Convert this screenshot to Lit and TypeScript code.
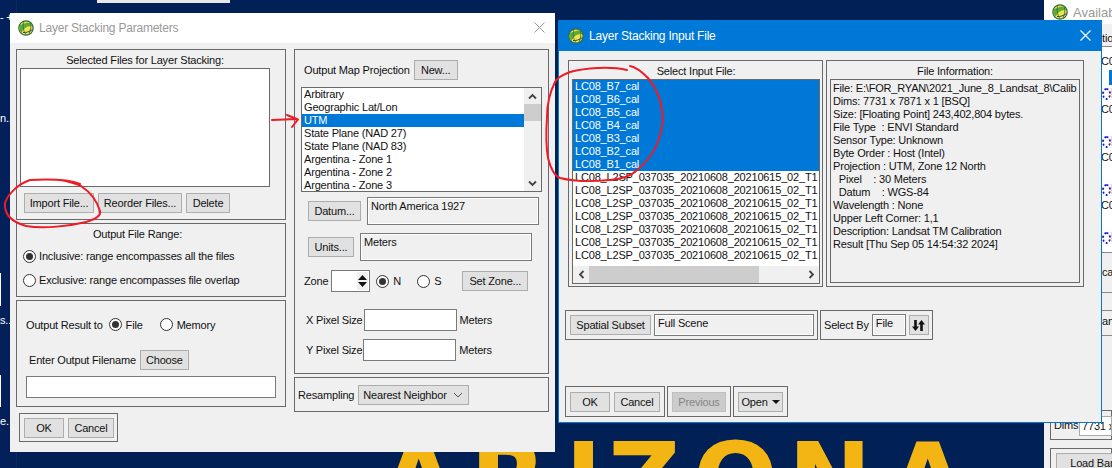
import { LitElement, html, css, svg } from 'lit';
import { customElement } from 'lit/decorators.js';

const globe = svg`<svg class="globe" width="16" height="16" viewBox="0 0 16 16">
  <circle cx="8" cy="8" r="7.2" fill="#f3e24a" stroke="#2e6b3a" stroke-width="1.2"/>
  <path d="M2 5.5C5 3.5 9 2 12.5 2.6L14.4 6C11 5.4 6 7 3.6 13L1.4 9.5Z" fill="#5cab3a"/>
  <path d="M6 1.2C4.5 5 5 10.5 8 14.8M12.5 2.6C13 6.5 13 10 11 14" fill="none" stroke="#2e6b3a" stroke-width=".8"/>
  <path d="M5 12.5C8 12.8 11 12 14.5 9.5" fill="none" stroke="#1d4f7a" stroke-width="1"/>
</svg>`;

const projections = ['Arbitrary', 'Geographic Lat/Lon', 'UTM', 'State Plane (NAD 27)', 'State Plane (NAD 83)',
  'Argentina - Zone 1', 'Argentina - Zone 2', 'Argentina - Zone 3'];
const selectedBands = ['B7', 'B6', 'B5', 'B4', 'B3', 'B2', 'B1'];
const info = ['File: E:\\FOR_RYAN\\2021_June_8_Landsat_8\\Calib', 'Dims: 7731 x 7871 x 1 [BSQ]',
  'Size: [Floating Point] 243,402,804 bytes.', 'File Type  : ENVI Standard', 'Sensor Type: Unknown',
  'Byte Order : Host (Intel)', 'Projection : UTM, Zone 12 North', '  Pixel    : 30 Meters', '  Datum    : WGS-84',
  'Wavelength : None', 'Upper Left Corner: 1,1', 'Description: Landsat TM Calibration',
  'Result [Thu Sep 05 14:54:32 2024]'];
// the wallpaper lettering is wider set than the font, so each letter gets its own cell
const brand: [string, number][] = [['A', 90], ['R', 95], ['I', 43], ['Z', 85], ['O', 95], ['N', 101], ['A', 90]];

const chevron = (d: string) => svg`<svg width="9" height="7" viewBox="0 0 9 7"><path d="${d}" fill="none" stroke="#444" stroke-width="1.8"/></svg>`;

@customElement('app-root')
export class AppRoot extends LitElement {
  static styles = css`
    :host {
      display: block;
      width: 1112px;
      height: 468px;
      overflow: hidden;
      position: relative;
      background: #012055;
      font-family: "Liberation Sans", Arial, sans-serif;
      font-size: 11px;
      letter-spacing: -0.18px;
      color: #111;
    }
    * { box-sizing: border-box; }
    .globe { flex: none; }

    /* desktop behind the dialogs */
    .brand {
      position: absolute; left: 380px; top: 430px; display: flex;
      font: bold 100px/100px "DejaVu Sans", sans-serif;
      letter-spacing: 0; color: #f2b514; white-space: nowrap;
    }
    .topbox { position: absolute; left: 97px; top: 0; width: 133px; height: 3px; background: #e8e8e8; }
    .topline { position: absolute; left: 0; top: 0; width: 17px; height: 468px; background: #03205a; border-right: 1px solid #0a2a66; }
    .deskbox { position: absolute; left: 0; width: 1px; background: #fff; }
    .box1 { top: 273px; height: 33px; }
    .box2 { top: 375px; height: 32px; }
    .desktxt { position: absolute; left: 0; color: #fff; font-size: 11px; line-height: 13px; white-space: nowrap; }
    .t0 { top: 11px; }
    .t1 { top: 112px; }
    .t2 { top: 314px; }
    .t3 { top: 415px; }

    .win { position: absolute; background: #f0f0f0; }
    .titlebar { display: flex; align-items: center; gap: 5px; font-size: 12px; letter-spacing: -0.22px; padding-left: 8px; white-space: nowrap; }

    /* third window, mostly hidden */
    .back { left: 1044px; top: 0; width: 68px; height: 468px; overflow: hidden; }
    .back .titlebar { height: 24px; background: #fff; color: #999; font-size: 13px; letter-spacing: 0; }
    .back .tab { height: 22px; padding-left: 58px; line-height: 28px; white-space: nowrap; }
    .back .list { height: 206px; background: #fff; padding-left: 57px; overflow: hidden; border-top: 1px solid #888; }
    .back .item { height: 48px; position: relative; line-height: 13px; padding-top: 8px; white-space: nowrap; }
    .back .dot { position: absolute; left: 1px; top: 41px; width: 9px; height: 12px; border: 2px dotted #1c1cd8; border-radius: 50%; }
    .back .mark { position: absolute; left: 10px; top: 41px; width: 4px; height: 10px; background: #f6dca0; }
    .back .sel { position: absolute; left: 8px; top: 23px; width: 8px; height: 15px; background: #0078d7; }
    .back .strip { border-top: 1px solid #888; border-bottom: 1px solid #888; padding-left: 58px; white-space: nowrap; overflow: hidden; }
    .back .s1 { height: 41px; line-height: 38px; }
    .back .s2 { height: 26px; line-height: 20px; margin-top: 17px; }
    .back .dims { position: absolute; left: 6px; top: 410px; width: 62px; height: 30px; border: 1px solid #696969; padding: 8px 0 0 3px; white-space: nowrap; }
    .back .dimval { position: absolute; left: 35px; top: 416px; width: 33px; height: 20px; background: #fff; border: 1px solid #aaa; padding-left: 2px; line-height: 18px; white-space: nowrap; overflow: hidden; }
    .back .loadgrp { position: absolute; left: 6px; top: 448px; width: 62px; height: 30px; border: 1px solid #696969; padding: 4px 0 0 5px; }

    /* shared controls */
    .group { border: 1px solid #696969; }
    .btn {
      display: flex; align-items: center; justify-content: center; height: 20px; flex: none;
      background: #e1e1e1; border: 1px solid #adadad; white-space: nowrap;
    }
    .btn.off { background: #cccccc; border-color: #bfbfbf; color: #858585; }
    .field { background: #fff; border: 1px solid #7a7a7a; flex: none; }
    .readout { border: 1px solid #7a7a7a; box-shadow: inset 0 0 0 1px #fff; padding: 2px 3px; flex: none; }
    .row { display: flex; align-items: center; }
    .radio {
      width: 13px; height: 13px; border-radius: 50%; background: #fff; border: 1px solid #333; flex: none;
      display: flex; align-items: center; justify-content: center;
    }
    .radio.on::after { content: ''; width: 7px; height: 7px; border-radius: 50%; background: #333; }
    .listbox { background: #fff; border: 1px solid #696969; overflow: hidden; flex: none; }
    .li { height: 13px; line-height: 13px; padding-left: 2px; white-space: nowrap; overflow: hidden; }
    .li.sel { background: #0078d7; color: #fff; }
    .sb-arrow { display: flex; align-items: center; justify-content: center; flex: none; }

    /* layer stacking parameters */
    .params { left: 10px; top: 13px; width: 545px; height: 439px; }
    .params .titlebar { height: 30px; background: #fff; color: #999; position: relative; }
    .close { position: absolute; display: flex; }
    .params .close { right: 9px; top: 8px; }
    .params-body { display: flex; gap: 8px; padding: 6px 0 0 6px; }
    .col { display: flex; flex-direction: column; gap: 3px; flex: none; }
    .g-sel { width: 270px; height: 171px; padding: 3px 3px 0 3px; }
    .g-title { line-height: 15px; height: 15px; text-align: center; white-space: nowrap; }
    .g-sel .g-title { width: 250px; }
    .g-sel .listbox { width: 250px; height: 119px; }
    .file-btns { gap: 4px; margin: 6px 0 0 4px; }
    .g-range { width: 270px; height: 74px; padding-top: 3px; }
    .g-range .g-title { width: 241px; }
    .radio-line { gap: 3px; padding-left: 6px; height: 24px; white-space: nowrap; }
    .g-range .g-title + .radio-line { margin-top: 2px; }
    .g-output { width: 270px; height: 107px; padding: 16px 0 0 9px; }
    .out-to { height: 15px; white-space: nowrap; }
    .g-output .radio { margin: 0 4px 0 6px; }
    .g-output .radio.memory { margin-left: 17px; }
    .out-name { gap: 4px; margin: 18px 0 0 3px; white-space: nowrap; }
    .g-output .field { width: 250px; height: 22px; margin-top: 6px; }
    .g-ok { margin: 3px 0 0 3px; width: 99px; height: 29px; gap: 4px; padding-left: 4px; }

    .g-proj { width: 255px; height: 325px; padding: 10px 0 0 6px; }
    .proj-head { gap: 4px; margin-left: 3px; white-space: nowrap; }
    .proj-list { display: flex; width: 241px; height: 105px; margin-top: 7px; }
    .proj-list .rows { flex: 1; min-width: 0; }
    .vbar { width: 17px; flex: none; background: #f0f0f0; display: flex; flex-direction: column; height: 103px; }
    .vbar .sb-arrow { height: 16px; }
    .vbar .thumb { height: 17px; background: #cdcdcd; flex: none; }
    .vbar .fill { flex: 1; }
    .datum { gap: 6px; margin: 5px 0 0 7px; }
    .datum .readout { width: 172px; height: 28px; }
    .units { gap: 6px; margin: 8px 0 0 7px; }
    .units .readout { width: 172px; height: 28px; }
    .zone { margin: 8px 0 0 3px; height: 24px; white-space: nowrap; }
    .spin { width: 39px; height: 22px; margin-left: 3px; display: flex; justify-content: flex-end; padding: 1px; }
    .spin svg { display: block; }
    .zone .radio-n { margin: 0 4px 0 6px; }
    .zone .radio-s { margin: 0 4px 0 16px; }
    .zone .btn { margin-left: 21px; width: 66px; }
    .px { margin: 16px 0 0 5px; height: 22px; gap: 1px; white-space: nowrap; }
    .px + .px { margin-top: 8px; }
    .px .field { width: 93px; height: 22px; margin-right: 2px; }
    .g-resample { width: 255px; height: 35px; padding-left: 3px; gap: 4px; white-space: nowrap; }
    .select { width: 111px; justify-content: space-between; padding: 0 5px 0 4px; }

    /* layer stacking input file */
    .input { left: 558px; top: 20px; width: 544px; height: 403px; border: 1px solid #0078d7; }
    .input .titlebar { height: 30px; background: #0078d7; color: #fff; padding-left: 9px; position: relative; }
    .input .close { right: 9px; top: 8px; }
    .panes { display: flex; gap: 3px; padding: 9px 0 0 9px; }
    .g-files { width: 255px; height: 227px; padding: 3px 0 0 3px; }
    .g-files .g-title { width: 248px; }
    .g-files .listbox { width: 248px; height: 205px; margin-top: 0; display: flex; flex-direction: column; }
    .g-files .rows { height: 186px; overflow: hidden; }
    .hbar { height: 17px; display: flex; background: #f0f0f0; flex: none; }
    .hbar .sb-arrow { width: 16px; }
    .hbar .thumb { width: 170px; background: #cdcdcd; flex: none; }
    .hbar .fill { flex: 1; }
    .g-info { width: 258px; height: 227px; padding: 3px 0 0 3px; }
    .g-info .g-title { width: 250px; }
    .info-box { width: 250px; height: 204px; border: 1px solid #696969; padding: 2px 2px; overflow: hidden; }
    .info-box div { height: 13px; line-height: 13px; white-space: pre; }
    .subset-row { display: flex; gap: 2px; margin: 23px 0 0 6px; }
    .g-subset { width: 253px; height: 30px; padding-left: 4px; gap: 3px; }
    .g-subset .readout { width: 160px; height: 22px; }
    .g-by { width: 113px; height: 30px; padding-left: 3px; white-space: nowrap; }
    .g-by .readout { width: 34px; height: 22px; margin: 0 3px 0 3px; }
    .g-by .btn { width: 20px; }
    .action-row { display: flex; gap: 2px; margin: 46px 0 0 6px; }
    .action { height: 31px; padding: 0 4px; gap: 4px; }
    .action.a1 { width: 100px; }
    .action.a2 { width: 64px; }
    .action.a3 { width: 55px; }
    .caret { width: 0; height: 0; border: 4px solid transparent; border-top-color: #111; border-bottom: 0; margin-left: 4px; }

    .ink { position: absolute; left: 0; top: 0; pointer-events: none; }
  `;

  private desktop() {
    return html`
      <div class="topline"></div>
      <div class="topbox"></div>
      <div class="deskbox box1"></div>
      <div class="deskbox box2"></div>
      <div class="desktxt t0">- +</div>
      <div class="desktxt t1">n..</div>
      <div class="desktxt t2">s..</div>
      <div class="desktxt t3">e.</div>
      <div class="brand">${brand.map(([c, w]) => html`<span style="width:${w}px">${c}</span>`)}</div>
    `;
  }

  private backWindow() {
    const items = ['sel', '', '', ''];
    return html`
      <div class="win back">
        <div class="titlebar">${globe}<span>Available Bands List</span></div>
        <div class="tab">tions</div>
        <div class="list">
          ${items.map((kind) => html`
            <div class="item">C08_B1
              <span class="dot"></span>
              <span class="mark"></span>
              ${kind === 'sel' ? html`<span class="sel"></span>` : ''}
            </div>`)}
        </div>
        <div class="strip s1">cal</div>
        <div class="strip s2">an</div>
        <div class="dims">Dims</div>
        <div class="dimval">7731 x</div>
        <div class="loadgrp"><div class="btn" style="width:80px">Load Band</div></div>
      </div>
    `;
  }

  private paramsWindow() {
    return html`
      <div class="win params">
        <div class="titlebar">
          ${globe}<span>Layer Stacking Parameters</span>
          <span class="close"><svg width="13" height="13" viewBox="0 0 13 13"><path d="M1.5 1.5l10 10M11.5 1.5l-10 10" stroke="#999" stroke-width="1"/></svg></span>
        </div>
        <div class="params-body">
          <div class="col">
            <div class="group g-sel">
              <div class="g-title">Selected Files for Layer Stacking:</div>
              <div class="listbox"></div>
              <div class="row file-btns">
                <div class="btn" style="width:70px">Import File...</div>
                <div class="btn" style="width:84px">Reorder Files...</div>
                <div class="btn" style="width:44px">Delete</div>
              </div>
            </div>
            <div class="group g-range">
              <div class="g-title">Output File Range:</div>
              <div class="row radio-line"><span class="radio on"></span>Inclusive: range encompasses all the files</div>
              <div class="row radio-line"><span class="radio"></span>Exclusive: range encompasses file overlap</div>
            </div>
            <div class="group g-output">
              <div class="row out-to">Output Result to<span class="radio on"></span>File<span class="radio memory"></span>Memory</div>
              <div class="row out-name">Enter Output Filename<div class="btn" style="width:49px">Choose</div></div>
              <div class="field"></div>
            </div>
            <div class="group row g-ok">
              <div class="btn" style="width:40px">OK</div>
              <div class="btn" style="width:46px">Cancel</div>
            </div>
          </div>
          <div class="col">
            <div class="group g-proj">
              <div class="row proj-head">Output Map Projection<div class="btn" style="width:44px">New...</div></div>
              <div class="listbox proj-list">
                <div class="rows">
                  ${projections.map((p) => html`<div class="li ${p === 'UTM' ? 'sel' : ''}">${p}</div>`)}
                </div>
                <div class="vbar">
                  <div class="sb-arrow">${chevron('M1 5.5L4.5 2L8 5.5')}</div>
                  <div class="thumb"></div>
                  <div class="fill"></div>
                  <div class="sb-arrow">${chevron('M1 1.5L4.5 5L8 1.5')}</div>
                </div>
              </div>
              <div class="row datum">
                <div class="btn" style="width:53px">Datum...</div>
                <div class="readout">North America 1927</div>
              </div>
              <div class="row units">
                <div class="btn" style="width:46px">Units...</div>
                <div class="readout">Meters</div>
              </div>
              <div class="row zone">
                Zone
                <div class="field spin">
                  <svg width="11" height="18" viewBox="0 0 11 18"><rect width="11" height="18" fill="#f0f0f0"/><path d="M1 8L5.5 3L10 8ZM1 10L5.5 15L10 10Z" fill="#111"/></svg>
                </div>
                <span class="radio on radio-n"></span>N
                <span class="radio radio-s"></span>S
                <div class="btn">Set Zone...</div>
              </div>
              <div class="row px">X Pixel Size<div class="field"></div>Meters</div>
              <div class="row px">Y Pixel Size<div class="field"></div>Meters</div>
            </div>
            <div class="group row g-resample">
              Resampling
              <div class="btn select">Nearest Neighbor
                <svg width="10" height="6" viewBox="0 0 10 6"><path d="M1 1L5 5L9 1" fill="none" stroke="#555" stroke-width="1"/></svg>
              </div>
            </div>
          </div>
        </div>
      </div>
    `;
  }

  private inputWindow() {
    const rest = Array.from({ length: 7 }, () => 'LC08_L2SP_037035_20210608_20210615_02_T1');
    return html`
      <div class="win input">
        <div class="titlebar">
          ${globe}<span>Layer Stacking Input File</span>
          <span class="close"><svg width="13" height="13" viewBox="0 0 13 13"><path d="M1.5 1.5l10 10M11.5 1.5l-10 10" stroke="#fff" stroke-width="1.2"/></svg></span>
        </div>
        <div class="panes">
          <div class="group g-files">
            <div class="g-title">Select Input File:</div>
            <div class="listbox">
              <div class="rows">
                ${selectedBands.map((b) => html`<div class="li sel">LC08_${b}_cal</div>`)}
                ${rest.map((r) => html`<div class="li">${r}</div>`)}
              </div>
              <div class="hbar">
                <div class="sb-arrow">
                  <svg width="7" height="9" viewBox="0 0 7 9"><path d="M5.5 1L2 4.5L5.5 8" fill="none" stroke="#444" stroke-width="1.8"/></svg>
                </div>
                <div class="thumb"></div>
                <div class="fill"></div>
                <div class="sb-arrow">
                  <svg width="7" height="9" viewBox="0 0 7 9"><path d="M1.5 1L5 4.5L1.5 8" fill="none" stroke="#444" stroke-width="1.8"/></svg>
                </div>
              </div>
            </div>
          </div>
          <div class="group g-info">
            <div class="g-title">File Information:</div>
            <div class="info-box">${info.map((l) => html`<div>${l}</div>`)}</div>
          </div>
        </div>
        <div class="subset-row">
          <div class="group row g-subset">
            <div class="btn" style="width:81px">Spatial Subset</div>
            <div class="readout">Full Scene</div>
          </div>
          <div class="group row g-by">
            Select By
            <div class="readout">File</div>
            <div class="btn">
              <svg width="15" height="13" viewBox="0 0 15 13"><path d="M4.5 12L1 7.5H3.2V1H5.8V7.5H8ZM10.5 1L14 5.5H11.8V12H9.2V5.5H7Z" fill="#111"/></svg>
            </div>
          </div>
        </div>
        <div class="action-row">
          <div class="group row action a1">
            <div class="btn" style="width:40px">OK</div>
            <div class="btn" style="width:46px">Cancel</div>
          </div>
          <div class="group row action a2">
            <div class="btn off" style="width:54px">Previous</div>
          </div>
          <div class="group row action a3">
            <div class="btn" style="width:45px">Open<span class="caret"></span></div>
          </div>
        </div>
      </div>
    `;
  }

  render() {
    return html`
      ${this.desktop()}
      ${this.backWindow()}
      ${this.paramsWindow()}
      ${this.inputWindow()}
      <svg class="ink" width="1112" height="468" viewBox="0 0 1112 468" fill="none" stroke="#ee1c25" stroke-width="2" stroke-linecap="round" stroke-linejoin="round">
        <path d="M80 184C70 180 50 179 30 180C18 184 8 194 5 203C4 214 12 222 26 226C44 229 70 226 86 222C96 219 101 216 100 211C97 201 90 192 81 186C72 182 66 181 60 180"/>
        <path d="M272 120L297 119M287 115L298 119.5L292 127"/>
        <path d="M627 70C610 66 585 68 570 72C562 75 557 78 555 82C550 92 547 105 547 117C546 132 546 147 548 158C551 170 555 176 560 178C572 181 590 182 610 180C620 179 630 177 636 171C646 163 654 152 658 142C662 130 664 120 662 110C660 95 654 85 648 78C642 72 636 67 630 66"/>
      </svg>
    `;
  }
}
